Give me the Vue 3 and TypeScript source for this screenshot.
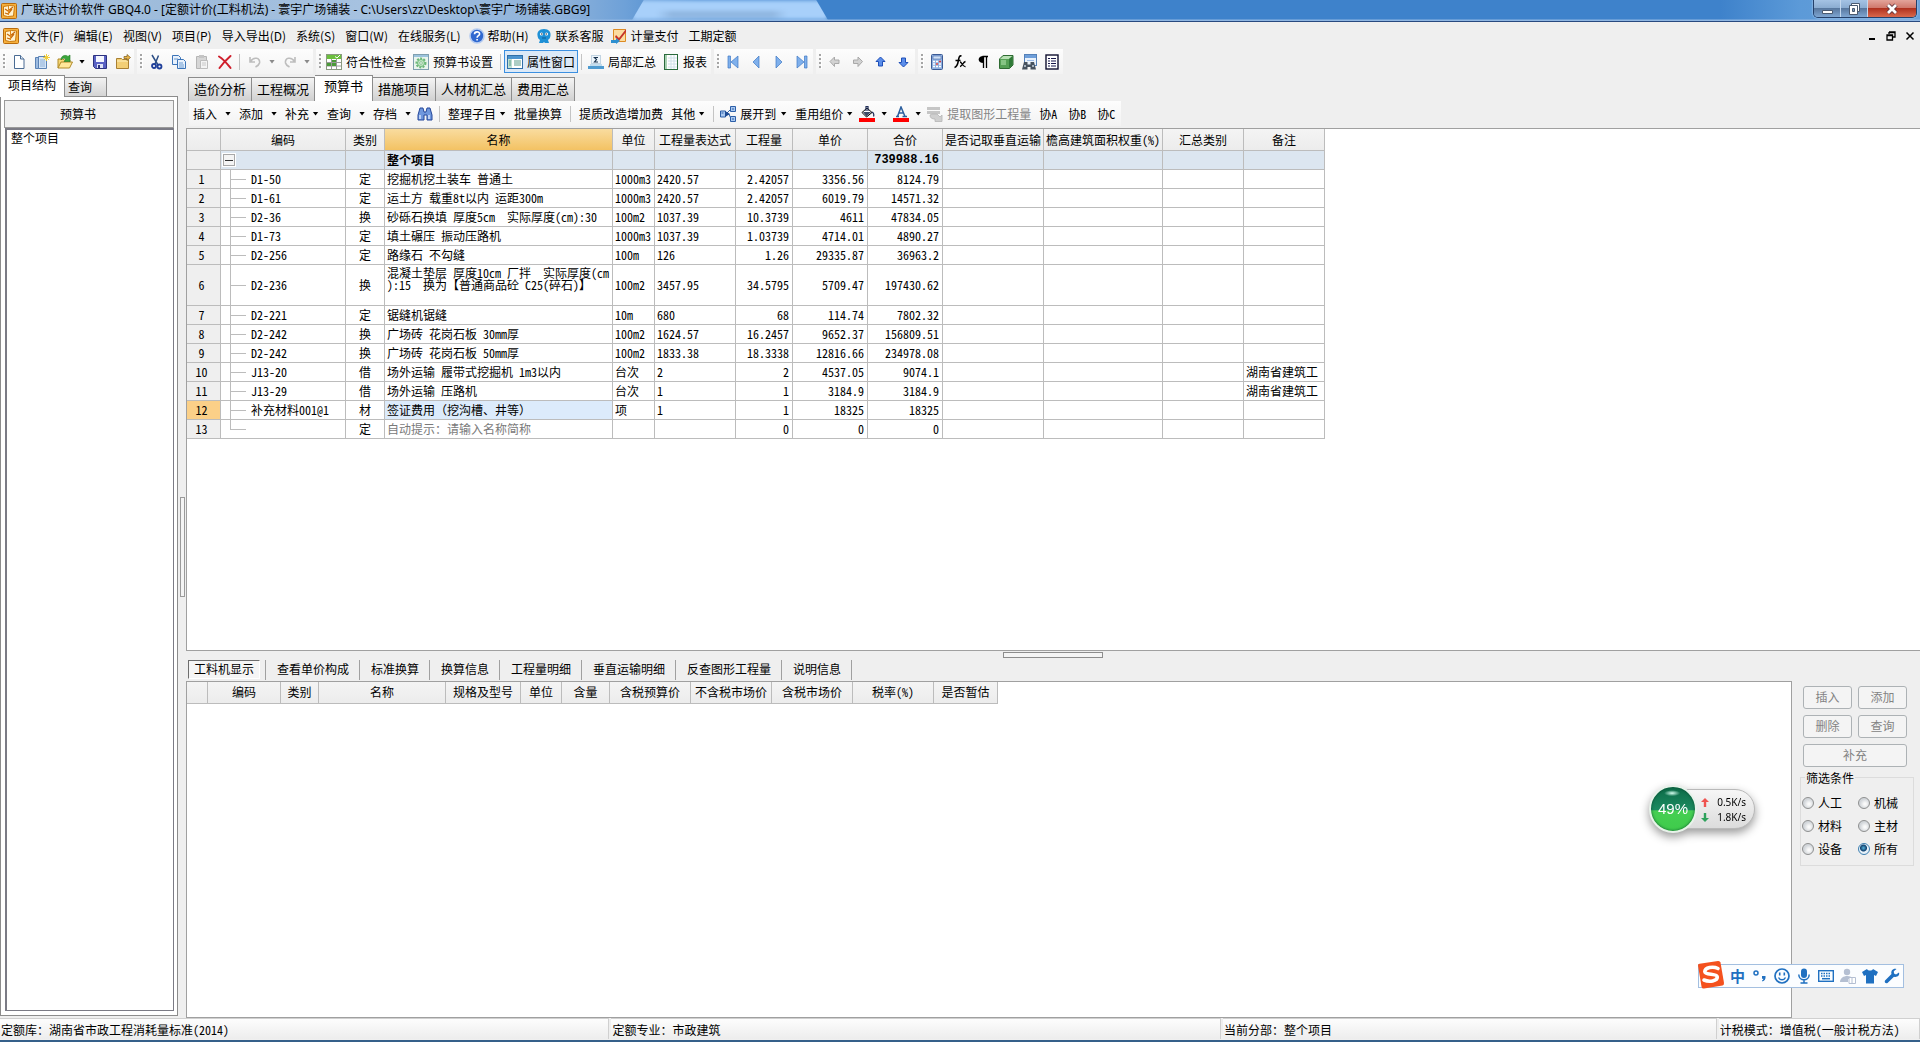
<script setup lang="ts">
import { ref } from 'vue'

interface BudgetRow {
  code: string
  kind: string
  name: string
  unit: string
  expr: string
  qty: string
  price: string
  total: string
  note?: string
}

interface Column {
  label: string
  cls: string
}

interface ToolItem {
  icon: string
  label: string
  off?: boolean
  drop?: boolean
}

const columns: Column[] = [
  { label: '', cls: 'c-num' },
  { label: '编码', cls: 'c-code' },
  { label: '类别', cls: 'c-kind' },
  { label: '名称', cls: 'c-name' },
  { label: '单位', cls: 'c-unit' },
  { label: '工程量表达式', cls: 'c-expr' },
  { label: '工程量', cls: 'c-qty' },
  { label: '单价', cls: 'c-price' },
  { label: '合价', cls: 'c-price' },
  { label: '是否记取垂直运输', cls: 'c-lift' },
  { label: '檐高建筑面积权重(%)', cls: 'c-eave' },
  { label: '汇总类别', cls: 'c-sum' },
  { label: '备注', cls: 'c-sum' },
]

const rows: BudgetRow[] = [
  { code: 'D1-50', kind: '定', name: '挖掘机挖土装车 普通土', unit: '1000m3', expr: '2420.57', qty: '2.42057', price: '3356.56', total: '8124.79' },
  { code: 'D1-61', kind: '定', name: '运土方 载重8t以内 运距300m', unit: '1000m3', expr: '2420.57', qty: '2.42057', price: '6019.79', total: '14571.32' },
  { code: 'D2-36', kind: '换', name: '砂砾石换填 厚度5cm  实际厚度(cm):30', unit: '100m2', expr: '1037.39', qty: '10.3739', price: '4611', total: '47834.05' },
  { code: 'D1-73', kind: '定', name: '填土碾压 振动压路机', unit: '1000m3', expr: '1037.39', qty: '1.03739', price: '4714.01', total: '4890.27' },
  { code: 'D2-256', kind: '定', name: '路缘石 不勾缝', unit: '100m', expr: '126', qty: '1.26', price: '29335.87', total: '36963.2' },
  { code: 'D2-236', kind: '换', name: '混凝土垫层 厚度10cm 厂拌  实际厚度(cm\n):15  换为【普通商品砼 C25(碎石)】', unit: '100m2', expr: '3457.95', qty: '34.5795', price: '5709.47', total: '197430.62' },
  { code: 'D2-221', kind: '定', name: '锯缝机锯缝', unit: '10m', expr: '680', qty: '68', price: '114.74', total: '7802.32' },
  { code: 'D2-242', kind: '换', name: '广场砖 花岗石板 30mm厚', unit: '100m2', expr: '1624.57', qty: '16.2457', price: '9652.37', total: '156809.51' },
  { code: 'D2-242', kind: '换', name: '广场砖 花岗石板 50mm厚', unit: '100m2', expr: '1833.38', qty: '18.3338', price: '12816.66', total: '234978.08' },
  { code: 'J13-20', kind: '借', name: '场外运输 履带式挖掘机 1m3以内', unit: '台次', expr: '2', qty: '2', price: '4537.05', total: '9074.1', note: '湖南省建筑工' },
  { code: 'J13-29', kind: '借', name: '场外运输 压路机', unit: '台次', expr: '1', qty: '1', price: '3184.9', total: '3184.9', note: '湖南省建筑工' },
  { code: '补充材料001@1', kind: '材', name: '签证费用（挖沟槽、井等）', unit: '项', expr: '1', qty: '1', price: '18325', total: '18325' },
  { code: '', kind: '定', name: '自动提示：请输入名称简称', unit: '', expr: '', qty: '0', price: '0', total: '0' },
]

const menus = ['文件(F)', '编辑(E)', '视图(V)', '项目(P)', '导入导出(D)', '系统(S)', '窗口(W)', '在线服务(L)']
const fileTools: ToolItem[] = [
  { icon: 'new', label: '新建' },
  { icon: 'newproj', label: '新建项目' },
  { icon: 'open', label: '打开', drop: true },
  { icon: 'save', label: '保存' },
  { icon: 'export', label: '导出' },
]
const editTools: ToolItem[] = [
  { icon: 'cut', label: '剪切' },
  { icon: 'copy', label: '复制' },
  { icon: 'paste', label: '粘贴', off: true },
  { icon: 'del', label: '删除' },
]
const undoTools: ToolItem[] = [
  { icon: 'undo', label: '撤销', off: true, drop: true },
  { icon: 'redo', label: '重做', off: true, drop: true },
]
const navTools: ToolItem[] = [
  { icon: 'first', label: '第一条' },
  { icon: 'prev', label: '上一条' },
  { icon: 'next', label: '下一条' },
  { icon: 'last', label: '最后一条' },
]
const moveTools: ToolItem[] = [
  { icon: 'left', label: '升级', off: true },
  { icon: 'right', label: '降级', off: true },
  { icon: 'up', label: '上移' },
  { icon: 'down', label: '下移' },
]
const miscTools: ToolItem[] = [
  { icon: 'calc', label: '计算器' },
  { icon: 'fx', label: '函数' },
  { icon: 'pilcrow', label: '特殊符号' },
  { icon: 'cube', label: '体积' },
  { icon: 'find', label: '查找' },
  { icon: 'list', label: '列表' },
]

const pages = ['造价分析', '工程概况', '预算书', '措施项目', '人材机汇总', '费用汇总']
const page = ref('预算书')
const details = ['工料机显示', '查看单价构成', '标准换算', '换算信息', '工程量明细', '垂直运输明细', '反查图形工程量', '说明信息']
const detail = ref('工料机显示')
const selected = ref(12)

const detailColumns: Column[] = [
  { label: '', cls: 'd-21' },
  { label: '编码', cls: 'd-73' },
  { label: '类别', cls: 'd-38' },
  { label: '名称', cls: 'd-127' },
  { label: '规格及型号', cls: 'd-75' },
  { label: '单位', cls: 'd-41' },
  { label: '含量', cls: 'd-48' },
  { label: '含税预算价', cls: 'd-81' },
  { label: '不含税市场价', cls: 'd-81' },
  { label: '含税市场价', cls: 'd-81' },
  { label: '税率(%)', cls: 'd-81' },
  { label: '是否暂估', cls: 'd-64' },
]

const filters = ['人工', '机械', '材料', '主材', '设备', '所有']
const filter = ref('所有')
</script>

<template>
  <div class="app">
    <svg class="sprite" width="0" height="0" aria-hidden="true">
      <symbol id="g-app" viewBox="0 0 16 16">
        <rect x="0.5" y="0.5" width="15" height="15" rx="1" fill="#f6b03c" stroke="#b96b0c" />
        <path d="M2.500 3.500l6-1 5 .5-1 10-6 .5-4-1z" fill="#fff3d0" stroke="#c8780f" />
        <path d="M4 6l3 2 5-4M4 10l3 1 4-5" fill="none" stroke="#c8690a" stroke-width="1.300" />
        <path d="M7.500 3v9" fill="none" stroke="#e08a1c" />
      </symbol>
      <symbol id="g-new" viewBox="0 0 16 16">
        <path d="M3.500 1.500h6l3.500 3.500v9.500h-9.500z" fill="#fff" stroke="#4a6b93" />
        <path d="M9.500 1.500v3.500h3.500" fill="#dbe7f5" stroke="#4a6b93" />
      </symbol>
      <symbol id="g-newproj" viewBox="0 0 16 16">
        <path d="M1.500 3.500h3v11h-3z" fill="#9dbbe0" stroke="#5b82b5" />
        <path d="M4.500 2.500h8v12h-8z" fill="#d5e5f7" stroke="#5b82b5" />
        <path d="M6 6h5M6 8h5M6 10h5M6 12h5" stroke="#8eb0d8" />
        <path d="M12.500 0v7M9 3.500h7M10 1l5 5M15 1l-5 5" stroke="#f3cf3a" />
      </symbol>
      <symbol id="g-open" viewBox="0 0 16 16">
        <path d="M1 14V5h5l1 1h6v3" fill="#f7d774" stroke="#b08a28" />
        <path d="M1 14l3-6h11.500l-3 6z" fill="#ffe79a" stroke="#b08a28" />
        <path d="M4 6c0-5 5-5.500 7-3.500L13 1v6.500H7L9 5C7 4 5.500 4 4 6z" fill="#3aa63a" stroke="#1f7a24" stroke-width="0.600" />
      </symbol>
      <symbol id="g-save" viewBox="0 0 16 16">
        <path d="M1.500 1.500h13v13h-11l-2-2z" fill="#5a62c4" stroke="#2c327f" />
        <path d="M4 2h8v6H4z" fill="#f4f6ff" />
        <path d="M5 10h6v4H5z" fill="#dfe3f7" />
        <path d="M6 11h2v3H6z" fill="#2c327f" />
      </symbol>
      <symbol id="g-export" viewBox="0 0 16 16">
        <path d="M1.500 4.500h5l1 1h6v9h-12z" fill="#f3cf75" stroke="#a98032" />
        <path d="M2 7h11" stroke="#fff1bf" />
        <path d="M9 4.500V2.500h3V0.500L15.500 3.500 12 6.500V4.500z" fill="#e9b54a" stroke="#7a5a1a" stroke-width="0.700" />
      </symbol>
      <symbol id="g-cut" viewBox="0 0 16 16">
        <path d="M4 1l6 10M10.500 1.500L7 10" stroke="#2d4f86" stroke-width="1.500" fill="none" />
        <circle cx="6" cy="12" r="2" fill="none" stroke="#1f3f9a" stroke-width="1.800" />
        <circle cx="11.500" cy="12.500" r="2" fill="none" stroke="#1f3f9a" stroke-width="1.800" />
      </symbol>
      <symbol id="g-copy" viewBox="0 0 16 16">
        <path d="M1.500 1.500h6l2 2v7h-8z" fill="#e8f1fc" stroke="#3c74b8" />
        <path d="M6.500 5.500h6l2 2v7h-8z" fill="#e8f1fc" stroke="#3c74b8" />
        <path d="M3 5h4M8 9h4M8 11h5M8 13h5" stroke="#6b9bd1" />
      </symbol>
      <symbol id="g-paste" viewBox="0 0 16 16">
        <path d="M2.500 2.500h10v12h-10z" fill="#d6d6d6" stroke="#b5b5b5" />
        <path d="M5 1h5v3H5z" fill="#c4c4c4" />
        <path d="M6.500 6.500h7v8h-7z" fill="#f3f3f3" stroke="#bdbdbd" />
        <path d="M8 9h4M8 11h4" stroke="#c8c8c8" />
      </symbol>
      <symbol id="g-del" viewBox="0 0 16 16">
        <path d="M2 2.500c5 3 8 7 11.500 11.500M13.500 2C9 6 6 9 2.500 14" fill="none" stroke="#cf1f2c" stroke-width="2" stroke-linecap="round" />
      </symbol>
      <symbol id="g-undo" viewBox="0 0 16 16">
        <path d="M3 3v5h5M3.500 7.500c3-5 10-4 9 1.500-.5 2-2 3-4 4" fill="none" stroke="#bdbdbd" stroke-width="1.600" />
      </symbol>
      <symbol id="g-redo" viewBox="0 0 16 16">
        <path d="M13 3v5H8M12.500 7.500c-3-5-10-4-9 1.500.5 2 2 3 4 4" fill="none" stroke="#bdbdbd" stroke-width="1.600" />
      </symbol>
      <symbol id="g-check" viewBox="0 0 16 16">
        <rect x="0.500" y="0.500" width="15" height="15" fill="#fff" stroke="#8a9a80" />
        <path d="M1 1h14v4H1z" fill="#6cbf3f" />
        <path d="M1 8.500h14M1 12h14M5.500 5v10M10.500 5v10" stroke="#9a9a9a" />
        <path d="M6 6h4v2H6zM6 9h4v3H6zM1 9h4v3H1z" fill="#4a9a38" />
        <path d="M9 2.500l2 1.500 3-3" stroke="#fff" fill="none" />
      </symbol>
      <symbol id="g-gear" viewBox="0 0 16 16">
        <rect x="0.500" y="0.500" width="15" height="15" fill="#eaf4ee" stroke="#7f9faf" />
        <path d="M1 1h14v2H1z" fill="#9cc3dd" />
        <circle cx="8" cy="9" r="4.500" fill="none" stroke="#6cb878" stroke-width="2" stroke-dasharray="2 1.300" />
        <circle cx="8" cy="9" r="3.500" fill="#c3e6c5" stroke="#6cb878" />
        <circle cx="8" cy="9" r="1.300" fill="#fff" stroke="#57a668" stroke-width="0.600" />
      </symbol>
      <symbol id="g-prop" viewBox="0 0 16 16">
        <rect x="0.500" y="1.500" width="15" height="13" fill="#fff" stroke="#2f6fa8" />
        <path d="M1 2h14v3H1z" fill="#4c94cf" />
        <path d="M1 5h4v9H1z" fill="#bfe0d3" />
        <path d="M2 7h2M2 9h2M2 11h2M7 7h7M7 9h7M7 11h7" stroke="#5a9b8a" />
      </symbol>
      <symbol id="g-sigma" viewBox="0 0 16 16">
        <rect x="3.500" y="1.500" width="9" height="8" fill="#eef6fc" stroke="#c2d4e2" />
        <path d="M10 3.500H6.500l2 2-2 2.500H10" fill="none" stroke="#1b3550" stroke-width="1.200" />
        <path d="M2 11h12" stroke="#8cc3e6" stroke-width="1" />
        <path d="M0 13.500h16" stroke="#4f9bd0" stroke-width="3" />
      </symbol>
      <symbol id="g-report" viewBox="0 0 16 16">
        <rect x="1.500" y="0.500" width="13" height="15" fill="#fff" stroke="#2b6b3c" />
        <path d="M2 1h2v14H2z" fill="#a9d0b2" />
        <path d="M5 4h9M5 7h9M5 10h9M5 13h9M8 1v14M11 1v14" stroke="#cfe0e8" />
      </symbol>
      <symbol id="g-first" viewBox="0 0 16 16">
        <path d="M3 2h2.500v12H3zM13 2v12L6 8z" fill="#7fb0ec" stroke="#3f78c4" stroke-width="0.700" />
      </symbol>
      <symbol id="g-prev" viewBox="0 0 16 16">
        <path d="M11 2v12L5 8z" fill="#7fb0ec" stroke="#3f78c4" stroke-width="0.700" />
      </symbol>
      <symbol id="g-next" viewBox="0 0 16 16">
        <path d="M5 2v12l6-6z" fill="#7fb0ec" stroke="#3f78c4" stroke-width="0.700" />
      </symbol>
      <symbol id="g-last" viewBox="0 0 16 16">
        <path d="M10.500 2H13v12h-2.500zM3 2v12l7-6z" fill="#7fb0ec" stroke="#3f78c4" stroke-width="0.700" />
      </symbol>
      <symbol id="g-left" viewBox="0 0 16 16">
        <path d="M3 7.500L7.500 3v3H12v3.500H7.500v3z" fill="#d2d2d2" stroke="#a9a9a9" />
      </symbol>
      <symbol id="g-right" viewBox="0 0 16 16">
        <path d="M12.500 7.500L8 3v3H3.500v3.500H8v3z" fill="#d2d2d2" stroke="#a9a9a9" />
      </symbol>
      <symbol id="g-up" viewBox="0 0 16 16">
        <path d="M7.500 3L12 7.500H9.500V12h-4V7.500H3z" fill="#5b8eea" stroke="#1f4fb8" />
      </symbol>
      <symbol id="g-down" viewBox="0 0 16 16">
        <path d="M7.500 13L12 8.500H9.500V4h-4v4.500H3z" fill="#5b8eea" stroke="#1f4fb8" />
      </symbol>
      <symbol id="g-calc" viewBox="0 0 16 16">
        <rect x="2.500" y="0.500" width="11" height="15" rx="1" fill="#8fb0e0" stroke="#3b5a94" />
        <path d="M4 2h8v3H4z" fill="#cfe0f6" stroke="#4a6ba8" stroke-width="0.600" />
        <path d="M4 7.500h8M4 10h8M4 12.500h8" stroke="#fff" stroke-width="1.600" stroke-dasharray="2 1" />
        <path d="M7 10h2M10 7.500h2" stroke="#d23b3b" stroke-width="1.500" />
      </symbol>
      <symbol id="g-fx" viewBox="0 0 16 16">
        <path d="M9.500 2C7.500 1.500 7 3 6.500 6S5.500 13 2.500 13.500M3.500 6.500h5" fill="none" stroke="#000" stroke-width="1.600" />
        <path d="M8 8c2 0 2.500 5 5.500 4.500M13.500 7.500C11 8 10.500 12 8 12.500" fill="none" stroke="#000" stroke-width="1.300" />
      </symbol>
      <symbol id="g-pilcrow" viewBox="0 0 16 16">
        <path d="M13 2.500H7.500M8.500 2v12M11.500 2v12" stroke="#000" stroke-width="1.300" fill="none" />
        <path d="M8.500 2C2 2 2 9 8.500 9z" fill="#000" />
      </symbol>
      <symbol id="g-cube" viewBox="0 0 16 16">
        <path d="M1.500 5L5 1.500h10V11l-3.500 3.500h-10z" fill="#55a055" stroke="#2f6b33" />
        <path d="M2 5l3.500-3h9L11 5z" fill="#b8e0b4" />
        <path d="M11 5l3.500-3v9L11 14z" fill="#2f7a38" />
        <path d="M3 6h5v5H3z" fill="#86c584" />
      </symbol>
      <symbol id="g-find" viewBox="0 0 16 16">
        <rect x="3.500" y="0.500" width="12" height="11" fill="#eaf2fb" stroke="#5581b8" />
        <path d="M4 1h11v3H4z" fill="#6f9fda" />
        <path d="M6 6.500h7" stroke="#9dbce6" />
        <path d="M3 8h3.500v2.500h3V8H13l2 7.500h-5.500V13h-3v2.500H1z" fill="#46525f" />
        <path d="M3 12h2M11 12h2" stroke="#c5d2df" stroke-width="1.500" />
      </symbol>
      <symbol id="g-list" viewBox="0 0 16 16">
        <rect x="2" y="1" width="12" height="14" fill="#fff" stroke="#101030" stroke-width="1.400" />
        <path d="M4 4.500h2M4 7h2M4 9.500h2M4 12h2M7 4.500h5M7 7h5M7 9.500h5M7 12h5" stroke="#17174a" />
      </symbol>
      <symbol id="g-help" viewBox="0 0 16 16">
        <circle cx="8" cy="8" r="7" fill="#2f68d0" stroke="#b5cbf0" stroke-width="1.600" />
        <path d="M5.500 6.300C5.500 3 10.700 3.200 10.600 6c0 1.700-2.500 1.800-2.500 3.800M8.100 11v1.600" fill="none" stroke="#fff" stroke-width="1.600" />
      </symbol>
      <symbol id="g-service" viewBox="0 0 16 16">
        <path d="M8 1c5 0 7 3 6.500 6.500C14 11 13 11 12 12l1 3H9l-1-1-1 1H3l1-3C3 11 2 11 1.500 7.500 1 4 3 1 8 1z" fill="#1e90d6" />
        <circle cx="5.500" cy="6" r="1.600" fill="#fff" /><circle cx="10.500" cy="6" r="1.600" fill="#fff" />
        <circle cx="5.800" cy="6" r="0.700" fill="#123" /><circle cx="10.200" cy="6" r="0.700" fill="#123" />
        <path d="M6 10h4" stroke="#0b5c94" />
      </symbol>
      <symbol id="g-pay" viewBox="0 0 16 16">
        <path d="M2.500 1.500h12v12h-12z" fill="#fbdca0" stroke="#dd8a22" />
        <path d="M15 1L8 10l-3-3-1 2 4 4 7-9z" fill="#c5342a" />
        <path d="M0 12h5v-2l4 3-4 3v-1H0z" fill="#2d8fd0" />
      </symbol>
      <symbol id="g-bino" viewBox="0 0 16 16">
        <path d="M3 2h3l1 4h2l1-4h3l2 7v5h-5V9H7v5H1V9z" fill="#6f97dd" stroke="#24479a" />
        <path d="M3 9v4M12 9v4" stroke="#dce8ff" stroke-width="1.400" />
      </symbol>
      <symbol id="g-expand" viewBox="0 0 16 16">
        <path d="M6 8l5-5M6 8h3l2 5" stroke="#2c5fa8" fill="none" />
        <path d="M0.500 5h5v6h-5zM10.500 0.500h5v5h-5zM10.500 10.500h5v5h-5z" fill="#a9c8f0" stroke="#2c5fa8" />
        <path d="M5 5l5 3-5 3z" fill="#1f4c94" />
        <path d="M12 3h2M12 13h2M1.500 7h2" stroke="#2c5fa8" />
      </symbol>
      <symbol id="g-bucket" viewBox="0 0 16 16">
        <path d="M3 6.500L8 2l5 4.500L7.500 11z" fill="#fff" stroke="#000" />
        <path d="M4 6h8l-4.500 4.500z" fill="#3c4a66" />
        <path d="M7 5V0.500h2V5M13 6c2 1 2 3 1.500 4.500" fill="none" stroke="#1d2b56" stroke-width="1.200" />
        <path d="M0 12h16v4H0z" fill="#f00" />
      </symbol>
      <symbol id="g-fontcolor" viewBox="0 0 16 16">
        <path d="M3 10.500h3M9.500 10.500H14M4.500 10.500L8 1l4 9.500M6 7h5" fill="none" stroke="#2c5f9e" stroke-width="1.500" />
        <path d="M0 12h16v4H0z" fill="#f00" />
      </symbol>
      <symbol id="g-extract" viewBox="0 0 16 16">
        <path d="M0 1h13v3H0zM0 5h13v3H0z" fill="#c6c6c6" />
        <path d="M3 9c0 3 2 4 5 4v2.500l7-0V9l-2 2-3-3H5z" fill="#cfcfcf" stroke="#b5b5b5" stroke-width="0.800" />
      </symbol>
    </svg>

    <header class="titlebar">
      <div class="ghost-tab"></div>
      <svg class="ic"><use href="#g-app" /></svg>
      <h1>广联达计价软件 GBQ4.0 - [定额计价(工料机法) - 寰宇广场铺装 - C:\Users\zz\Desktop\寰宇广场铺装.GBG9]</h1>
      <div class="winbtns">
        <button class="wb" aria-label="最小化"><svg width="13" height="14" viewBox="0 0 13 14"><path d="M1.500 8.500h10v3h-10z" fill="#fff" stroke="#4a5a70" /></svg></button>
        <button class="wb" aria-label="还原"><svg width="13" height="14" viewBox="0 0 13 14"><path d="M3.500 1.500h8v8h-8z" fill="#fff" stroke="#4a5a70" /><path d="M1.500 3.500h8v9h-8z" fill="#fff" stroke="#4a5a70" /><path d="M4.500 6.500h2v3h-2z" fill="#7d9dbd" stroke="#4a5a70" /></svg></button>
        <button class="wb close" aria-label="关闭"><svg width="14" height="14" viewBox="0 0 14 14"><path d="M3 3l8 8M11 3l-8 8" stroke="#5b3038" stroke-width="4.500" /><path d="M3 3l8 8M11 3l-8 8" stroke="#fff" stroke-width="2.800" /></svg></button>
      </div>
    </header>

    <nav class="menubar">
      <svg class="ic"><use href="#g-app" /></svg>
      <button v-for="m in menus" :key="m" class="menu">{{ m }}</button>
      <button class="menu"><svg class="ic"><use href="#g-help" /></svg>帮助(H)</button>
      <button class="menu"><svg class="ic"><use href="#g-service" /></svg>联系客服</button>
      <button class="menu"><svg class="ic"><use href="#g-pay" /></svg>计量支付</button>
      <button class="menu">工期定额</button>
      <div class="mdi">
        <button aria-label="最小化子窗口"><svg width="10" height="10" viewBox="0 0 10 10"><path d="M2 8h6" stroke="#000" stroke-width="2" /></svg></button>
        <button aria-label="还原子窗口"><svg width="10" height="10" viewBox="0 0 10 10"><path d="M3 1h6v5H7M3 1v2M3 1.500h6M1 4h5.500v5H1zM1 4.500h5" fill="none" stroke="#000" stroke-width="1.300" /></svg></button>
        <button aria-label="关闭子窗口"><svg width="10" height="10" viewBox="0 0 10 10"><path d="M1.500 1.500l7 7M8.500 1.500l-7 7" stroke="#000" stroke-width="1.500" /></svg></button>
      </div>
    </nav>

    <div class="toolbar">
      <div class="group">
        <i class="grip"></i>
        <template v-for="t in fileTools" :key="t.icon">
          <button class="tb" :aria-label="t.label"><svg class="ic"><use :href="'#g-' + t.icon" /></svg></button>
          <button v-if="t.drop" class="drop" :aria-label="t.label + '选项'"><i class="caret"></i></button>
        </template>
      </div>
      <div class="group">
        <i class="grip"></i>
        <button v-for="t in editTools" :key="t.icon" class="tb" :aria-label="t.label" :disabled="t.off"><svg class="ic"><use :href="'#g-' + t.icon" /></svg></button>
        <i class="sep slim"></i>
        <template v-for="t in undoTools" :key="t.icon">
          <button class="tb" :aria-label="t.label" disabled><svg class="ic"><use :href="'#g-' + t.icon" /></svg></button>
          <button class="drop" :aria-label="t.label + '选项'" disabled><i class="caret grey"></i></button>
        </template>
      </div>
      <div class="group">
        <i class="grip"></i>
        <button class="tx"><svg class="ic"><use href="#g-check" /></svg>符合性检查</button>
        <button class="tx"><svg class="ic"><use href="#g-gear" /></svg>预算书设置</button>
        <i class="sep slim"></i>
        <button class="tx pressed"><svg class="ic"><use href="#g-prop" /></svg>属性窗口</button>
        <i class="sep slim"></i>
        <button class="tx"><svg class="ic"><use href="#g-sigma" /></svg>局部汇总</button>
        <button class="tx"><svg class="ic"><use href="#g-report" /></svg>报表</button>
      </div>
      <div v-for="(set, i) in [navTools, moveTools, miscTools]" :key="i" class="group">
        <i class="grip"></i>
        <button v-for="t in set" :key="t.icon" class="tb" :aria-label="t.label" :disabled="t.off"><svg class="ic"><use :href="'#g-' + t.icon" /></svg></button>
      </div>
    </div>

    <div class="body">
      <aside class="side">
        <div class="sidetabs">
          <button class="sidetab on">项目结构</button>
          <button class="sidetab">查询</button>
        </div>
        <div class="sidepanel">
          <div class="sidehead">预算书</div>
          <ul class="tree"><li><a href="#">整个项目</a></li></ul>
        </div>
      </aside>
      <div class="vsplit"><i class="vhandle"></i></div>

      <main class="main">
        <div class="pages">
          <button v-for="p in pages" :key="p" class="page" :class="{ on: p === page }" @click="page = p">{{ p }}</button>
        </div>
        <div class="toolbar second">
          <div class="group">
            <button class="m">插入</button><button class="drop wide" aria-label="插入选项"><i class="caret"></i></button>
            <button class="m">添加</button><button class="drop wide" aria-label="添加选项"><i class="caret"></i></button>
            <button class="m">补充<i class="caret"></i></button>
            <button class="m">查询</button><button class="drop wide" aria-label="查询选项"><i class="caret"></i></button>
            <button class="m">存档</button><button class="drop wide" aria-label="存档选项"><i class="caret"></i></button>
            <button class="im" aria-label="查找"><svg class="ic"><use href="#g-bino" /></svg></button>
            <i class="sep"></i>
            <button class="m">整理子目<i class="caret"></i></button>
            <button class="m">批量换算</button>
            <i class="sep"></i>
            <button class="m">提质改造增加费</button>
            <button class="m">其他<i class="caret"></i></button>
            <i class="sep"></i>
            <button class="im"><svg class="ic"><use href="#g-expand" /></svg>展开到<i class="caret"></i></button>
            <button class="m">重用组价<i class="caret"></i></button>
            <button class="im" aria-label="背景色"><svg class="ic"><use href="#g-bucket" /></svg></button><button class="drop wide" aria-label="背景色选项"><i class="caret"></i></button>
            <button class="im" aria-label="字体颜色"><svg class="ic"><use href="#g-fontcolor" /></svg></button><button class="drop wide" aria-label="字体颜色选项"><i class="caret"></i></button>
            <button class="im" disabled><svg class="ic"><use href="#g-extract" /></svg>提取图形工程量</button>
            <button class="m xie">协A</button>
            <button class="m xie">协B</button>
            <button class="m xie">协C</button>
          </div>
        </div>

        <section class="gridbox">
          <table class="grid">
            <colgroup><col v-for="(c, i) in columns" :key="i" :class="c.cls" /></colgroup>
            <thead>
              <tr><th v-for="(c, i) in columns" :key="i" :class="{ hot: c.label === '名称' }">{{ c.label }}</th></tr>
            </thead>
            <tbody>
              <tr class="root">
                <td class="num"></td>
                <td class="toggle"><button class="minus" aria-label="折叠"></button></td>
                <td></td>
                <td>整个项目</td>
                <td></td><td></td><td></td><td></td>
                <td class="r">739988.16</td>
                <td></td><td></td><td></td><td></td>
              </tr>
              <tr v-for="(r, i) in rows" :key="i" :class="{ tall: r.name.includes('\n'), sel: selected === i + 1, tail: !r.code }" @click="selected = i + 1">
                <td class="num">{{ i + 1 }}</td>
                <td class="code">{{ r.code }}</td>
                <td class="c">{{ r.kind }}</td>
                <td class="name">{{ r.name }}</td>
                <td>{{ r.unit }}</td>
                <td>{{ r.expr }}</td>
                <td class="r">{{ r.qty }}</td>
                <td class="r">{{ r.price }}</td>
                <td class="r">{{ r.total }}</td>
                <td></td><td></td><td></td>
                <td>{{ r.note }}</td>
              </tr>
            </tbody>
          </table>
        </section>

        <div class="hsplit"><i class="hhandle"></i></div>
        <div class="details">
          <button v-for="d in details" :key="d" class="detail" :class="{ on: d === detail }" @click="detail = d"><span>{{ d }}</span></button>
        </div>

        <div class="lower">
          <section class="lowgrid">
            <table class="grid">
              <colgroup><col v-for="(c, i) in detailColumns" :key="i" :class="c.cls" /></colgroup>
              <thead><tr><th v-for="(c, i) in detailColumns" :key="i">{{ c.label }}</th></tr></thead>
            </table>
          </section>
          <aside class="ops">
            <div class="opbtns">
              <button disabled>插入</button>
              <button disabled>添加</button>
              <button disabled>删除</button>
              <button disabled>查询</button>
              <button class="full" disabled>补充</button>
            </div>
            <fieldset>
              <legend>筛选条件</legend>
              <label v-for="f in filters" :key="f"><input v-model="filter" type="radio" name="filter" :value="f" />{{ f }}</label>
            </fieldset>
          </aside>
        </div>
      </main>
    </div>

    <footer class="status">
      <span class="s1">定额库：湖南省市政工程消耗量标准(2014)</span>
      <span class="s1">定额专业：市政建筑</span>
      <span class="s2">当前分部：整个项目</span>
      <span class="s3">计税模式：增值税(一般计税方法)</span>
    </footer>

    <div class="monitor">
      <div class="ball">49%</div>
      <div class="rates">
        <div><svg width="8" height="9" viewBox="0 0 8 9"><path d="M4 0l4 4H5.200v5H2.800V4H0z" fill="#ef5350" /></svg>0.5K/s</div>
        <div><svg width="8" height="9" viewBox="0 0 8 9"><path d="M4 9l4-4H5.200V0H2.800v5H0z" fill="#2fa25c" /></svg>1.8K/s</div>
      </div>
    </div>

    <div class="ime">
      <svg class="sogou" width="30" height="30" viewBox="0 0 30 30">
        <path d="M2 5.500Q2 4 3.500 3.700L22 1q2-.2 2.500 1.500L28 23q.2 2-1.500 2.500L8 28.500q-2 .3-2.400-1.500z" fill="#f4511e" />
        <path d="M22 8.500C17 6 9 7.500 8.800 11.500c0 4 12.500 1.500 12.500 5.500 0 4-8 5.500-13.300 3" fill="none" stroke="#fff" stroke-width="3.600" stroke-linecap="round" />
      </svg>
      <b>中</b>
      <svg width="16" height="16" viewBox="0 0 16 16"><circle cx="4" cy="5" r="2" fill="none" stroke="#1f70c1" stroke-width="1.500" /><path d="M10 8h3.500c.5 3-1 5-3 5.500l-.5-1c1-.5 1.300-1 1.300-1.700H10z" fill="#1f70c1" /></svg>
      <svg width="16" height="16" viewBox="0 0 16 16"><circle cx="8" cy="8" r="7" fill="none" stroke="#1f70c1" stroke-width="1.700" /><path d="M5.700 4.500v3M10.300 4.500v3" stroke="#1f70c1" stroke-width="1.600" /><path d="M4.500 9.500c1.500 3 5.500 3 7 0" fill="none" stroke="#1f70c1" stroke-width="1.500" /></svg>
      <svg width="16" height="16" viewBox="0 0 16 16"><rect x="5" y="0.500" width="6" height="9.500" rx="3" fill="#1f70c1" /><path d="M2.800 6.500c0 7 10.400 7 10.400 0M8 12v3M4.500 15h7" fill="none" stroke="#1f70c1" stroke-width="1.500" /></svg>
      <svg width="16" height="16" viewBox="0 0 16 16"><rect x="0.700" y="2.700" width="14.600" height="10.600" fill="none" stroke="#1f70c1" stroke-width="1.400" /><path d="M3 5.500h10M3 8h10" stroke="#1f70c1" stroke-width="1.500" stroke-dasharray="1.500 1" /><path d="M4 10.700h8" stroke="#1f70c1" stroke-width="1.500" /></svg>
      <svg width="16" height="16" viewBox="0 0 16 16"><circle cx="7" cy="4" r="3.200" fill="#b4bfd2" /><path d="M0 14c0-7 11-8 13-3H8v3z" fill="#b4bfd2" /><path d="M9 9.500h6.500v6H9zM12 9.500v6" fill="#fff" stroke="#b4bfd2" /></svg>
      <svg width="16" height="16" viewBox="0 0 16 16"><path d="M5 1c1 2 5 2 6 0l5 3-2 4-2-1v8.500H4V7L2 8 0 4z" fill="#1f70c1" /></svg>
      <svg width="16" height="16" viewBox="0 0 16 16"><path d="M15 4.500l-3 2-2-1-.2-2.300L12.500 1C9 0 6.500 3 7.500 6L1 12.500c-1 2 1 3.500 2.500 2.500L10 8.700c3 .8 6-1.200 5-4.200z" fill="#1f70c1" /></svg>
    </div>
  </div>
</template>

<style>
body {
  margin: 0;
  background: #efefef;
}
</style>

<style scoped>
.app {
  --song: "Noto Sans Mono CJK SC", "Noto Sans CJK SC", sans-serif;
  --hei: "Noto Sans CJK SC", "Noto Sans", sans-serif;
  display: flex;
  flex-direction: column;
  min-height: 100vh;
  background: #efefef;
  color: #000;
  font: 12px/16px var(--hei);
  overflow: hidden;
}

.app * {
  box-sizing: border-box;
}

button {
  margin: 0;
  padding: 0;
  border: 0;
  background: none;
  color: inherit;
  font: inherit;
  white-space: nowrap;
}

.sprite {
  position: absolute;
}

.ic {
  flex: none;
  width: 16px;
  height: 16px;
}

.titlebar {
  position: relative;
  display: flex;
  align-items: center;
  height: 22px;
  padding-left: 1px;
  border-bottom: 1px solid #284a80;
  background:
    linear-gradient(transparent 19px, #8fb6e2 20px),
    linear-gradient(90deg, #a9c3de 0, #9dbbdb 180px, #a6c2e0 360px, #8eb2da 560px, #6ea1d8 625px, #3e82cb 700px, #3e82cb 1720px, #5c9ad8 1800px, #6aa2da 100%);
}

.ghost-tab {
  position: absolute;
  left: 632px;
  top: 0;
  width: 196px;
  height: 20px;
  background: linear-gradient(90deg, transparent 24px, #8fb5df 40px, #8fb5df 140px, transparent 156px) 0 11px / 100% 7px no-repeat, #a8d0fa;
  clip-path: polygon(6% 0, 94% 0, 100% 100%, 0 100%);
  filter: blur(2px);
}

.titlebar h1 {
  margin: 0 0 3px 4px;
  font: 12px/17px "Noto Sans", "Noto Sans CJK SC", sans-serif;
  white-space: nowrap;
}

.winbtns {
  display: flex;
  align-self: flex-start;
  height: 18px;
  margin: 0 3px 0 auto;
  border: 1px solid #24406a;
  border-top: 0;
  border-radius: 0 0 5px 5px;
  overflow: hidden;
  box-shadow: 0 0 2px #d8e8fa;
}

.wb {
  display: flex;
  align-items: center;
  justify-content: center;
  width: 27px;
  border-right: 1px solid #c4d8ee;
  background: linear-gradient(#a5c3e4 0, #8cadd2 45%, #58789f 50%, #7fa6d2 100%);
}

.wb.close {
  width: 48px;
  border: 0;
  background: linear-gradient(#e3a49a 0, #d0796c 45%, #b0321f 50%, #d9694c 100%);
}

.menubar {
  display: flex;
  align-items: center;
  gap: 10px;
  height: 27px;
  padding: 0 5px 0 3px;
}

.menubar > .ic {
  margin-right: -4px;
}

.menu {
  display: flex;
  align-items: center;
  gap: 3px;
}

.menu .ic {
  margin-left: -2px;
}

.mdi {
  display: flex;
  gap: 9px;
  margin-left: auto;
}

.mdi svg {
  display: block;
}

.toolbar {
  display: flex;
  gap: 3px;
  height: 25px;
}

.group {
  display: flex;
  align-items: center;
  height: 25px;
  background: linear-gradient(#fdfdfd, #f3f3f3);
}

.grip {
  width: 3px;
  height: 15px;
  margin: 0 1px 0 3px;
  background: repeating-linear-gradient(#a5a5a5 0 2px, transparent 2px 4px);
  background-clip: content-box;
  border-right: 1px solid #fff;
}

.tb {
  display: flex;
  justify-content: center;
  width: 23px;
}

.drop {
  display: flex;
  justify-content: center;
  width: 12px;
}

.drop.wide {
  width: 14px;
}

.caret {
  flex: none;
  width: 7px;
  height: 4px;
  background: #000;
  clip-path: polygon(7% 0, 93% 0, 50% 100%);
}

.caret.grey {
  background: #8a8a8a;
}

.sep {
  width: 1px;
  height: 16px;
  margin: 0 4px;
  background: #c4c4c4;
}

.sep.slim {
  margin: 0 3px;
}

.tx {
  display: flex;
  align-items: center;
  gap: 4px;
  height: 23px;
  padding: 0 3px;
  margin-right: 1px;
}

.tx.pressed {
  margin-right: 0;
  border: 1px solid #3b8fe0;
  background: #dce9f7;
  padding: 0 2px;
}

.second {
  height: 27px;
  padding-left: 3px;
}

.m {
  display: flex;
  align-items: center;
  gap: 3px;
  padding: 0 4px;
}

.im {
  display: flex;
  align-items: center;
  gap: 4px;
  padding: 0 2px;
}

.im .caret {
  margin-right: 2px;
}

.im:disabled {
  color: #858585;
  padding-right: 4px;
}

.xie {
  margin-right: 3px;
}

.xie:last-child {
  margin-right: 2px;
}

.body {
  flex: 1;
  display: flex;
  min-height: 0;
  padding-top: 1px;
  font-family: var(--song);
}

.side {
  display: flex;
  flex-direction: column;
  width: 178px;
}

.sidetabs {
  display: flex;
  align-items: flex-end;
  height: 21px;
}

.sidetab {
  height: 19px;
  padding: 0 14px 1px 3px;
  border: 1px solid #8c8c8c;
  border-left: 0;
  border-bottom: 0;
  background: linear-gradient(#f2f2f2, #d4d4d4);
}

.sidetab.on {
  height: 22px;
  margin-bottom: -1px;
  padding: 0 8px 3px;
  background: #fff;
  z-index: 1;
}

.sidepanel {
  flex: 1;
  display: flex;
  flex-direction: column;
  margin-bottom: 2px;
  padding: 3px;
  border: 1px solid #8c8c8c;
  background: #fff;
}

.sidehead {
  height: 28px;
  padding-right: 22px;
  border: 1px solid #9a9a9a;
  background: #f0f0f0;
  line-height: 26px;
  text-align: center;
}

.tree {
  flex: 1;
  margin: 0 0 1px 1px;
  padding: 0 4px;
  border: 1px solid #7b7b85;
  border-top-width: 2px;
  border-left-width: 2px;
  list-style: none;
}

.tree a {
  color: #000;
  text-decoration: none;
}

.vsplit {
  display: flex;
  align-items: center;
  justify-content: center;
  width: 8px;
}

.vhandle {
  width: 5px;
  height: 100px;
  border: 1px solid #9a9a9a;
  background: #f4f4f4;
}

.main {
  flex: 1;
  display: flex;
  flex-direction: column;
  min-width: 0;
}

.pages {
  display: flex;
  align-items: flex-end;
  height: 26px;
  padding-left: 2px;
}

.page {
  height: 24px;
  padding: 0 5px 1px;
  border: solid #8c8c8c;
  border-width: 1px 1px 0 0;
  background: linear-gradient(#f4f4f4, #d0d0d0);
  font-size: 13px;
}

.page:first-child {
  border-left-width: 1px;
}

.page.on {
  height: 26px;
  padding: 0 9px 5px;
  background: #fff;
}

.gridbox {
  flex: 522 1 0;
  border: solid #a0a0a0;
  border-width: 1px 0 1px 1px;
  background: #fff;
}

.grid {
  width: 0;
  border-collapse: separate;
  border-spacing: 0;
  table-layout: fixed;
}

.grid th,
.grid td {
  height: 19px;
  padding: 0 2px;
  border: solid #bcbcbc;
  border-width: 0 1px 1px 0;
  line-height: 16px;
  font-weight: normal;
  text-align: left;
  white-space: pre;
  overflow: hidden;
}

.grid th {
  height: 22px;
  padding: 0;
  background: linear-gradient(#f4f4f4, #ececec);
  text-align: center;
}

.grid th.hot {
  background: linear-gradient(#f9dc9f, #f3c263);
}

.grid td.r {
  padding-right: 3px;
  text-align: right;
}

.grid td.c {
  text-align: center;
}

.grid td.num {
  background: #efefef;
  text-align: center;
  padding-right: 6px;
}

.grid .root td {
  background: #dce6f0;
  font-weight: bold;
}

.grid .root td.r {
  font-family: "Liberation Mono", monospace;
}

.grid .root td.num {
  background: #efefef;
}

.toggle {
  line-height: 0;
}

.minus {
  display: block;
  width: 12px;
  height: 12px;
  border: 1px solid #a8a8a8;
  outline: 1px solid #fff;
  background: linear-gradient(#333, #333) center / 8px 1px no-repeat, #f4f4f4;
}

.grid td.code {
  padding-left: 30px;
  background:
    linear-gradient(#bcbcbc, #bcbcbc) 9px 0 / 1px 100% no-repeat,
    linear-gradient(#bcbcbc, #bcbcbc) 9px 50% / 16px 1px no-repeat;
}

.grid .tail td.code {
  background-size: 1px 50%, 16px 1px;
}

.tail .name {
  color: #7a7a7a;
}

.grid .tall td {
  height: 41px;
}

.grid .tall td.name {
  padding-top: 2px;
  line-height: 12px;
  vertical-align: top;
}

.grid .sel td.num {
  background: #fbd088;
}

.grid .sel td.name {
  background: #dcebfb;
}

.c-num { width: 34px; }
.c-code { width: 125px; }
.c-kind { width: 39px; }
.c-name { width: 228px; }
.c-unit { width: 42px; }
.c-expr { width: 81px; }
.c-qty { width: 57px; }
.c-price { width: 75px; }
.c-lift { width: 101px; }
.c-eave { width: 119px; }
.c-sum { width: 81px; }
.d-21 { width: 21px; }
.d-38 { width: 38px; }
.d-41 { width: 41px; }
.d-48 { width: 48px; }
.d-64 { width: 64px; }
.d-73 { width: 73px; }
.d-75 { width: 75px; }
.d-81 { width: 81px; }
.d-127 { width: 127px; }

.hsplit {
  display: flex;
  justify-content: center;
  height: 8px;
  padding-top: 1px;
}

.hhandle {
  width: 100px;
  height: 6px;
  border: 1px solid #8c8c8c;
  background: #f4f4f4;
}

.details {
  display: flex;
  align-items: center;
  height: 22px;
  padding-left: 2px;
}

.detail {
  height: 20px;
  padding: 0 10px 2px 11px;
  border-right: 1px solid #a0a0a0;
}

.detail.on {
  padding: 0 5px 0 0;
}

.detail.on span {
  display: block;
  height: 19px;
  padding: 0 5px;
  border: 1px solid #fff;
  border-top-color: #6e6e6e;
  border-left-color: #6e6e6e;
  background: #f5f5f5;
}

.lower {
  flex: 338 1 0;
  display: flex;
}

.lowgrid {
  flex: 1;
  border: 1px solid #a0a0a0;
  background: #fff;
}

.ops {
  width: 128px;
  padding: 5px 6px 0 8px;
}

.opbtns {
  display: grid;
  grid-template-columns: 1fr 1fr;
  gap: 6px;
  padding: 0 7px 0 3px;
}

.opbtns button {
  height: 23px;
  border: 1px solid #adb2b5;
  border-radius: 3px;
  background: #f4f4f4;
  color: #838383;
}

.opbtns .full {
  grid-column: span 2;
}

fieldset {
  display: grid;
  grid-template-columns: 56px 56px;
  grid-auto-rows: 23px;
  margin: 3px 0 0;
  padding: 6px 0 4px;
  border: 1px solid #dcdcdc;
}

legend {
  padding: 0 1px;
  margin-left: 4px;
}

label {
  display: flex;
  align-items: center;
  gap: 4px;
}

input[type='radio'] {
  appearance: none;
  width: 12px;
  height: 12px;
  margin: 0 0 0 1px;
  border: 1px solid #8e8f8f;
  border-radius: 50%;
  background: radial-gradient(circle at 60% 60%, #fafafa 1px, #d2d6da 5px);
}

input[type='radio']:checked {
  border-color: #3c7fb1;
  background: radial-gradient(circle at 45% 40%, #57b4dc 0, #10406e 3px, #e6f0f8 4px);
}

.status {
  display: flex;
  gap: 2px;
  height: 24px;
  padding-bottom: 1px;
  border-bottom: 2px solid #35608a;
  font-family: var(--song);
}

.status span {
  flex: 610 1 0;
  height: 21px;
  padding-left: 1px;
  border: solid #d0d0d0;
  border-width: 1px 1px 0 0;
  background: linear-gradient(#fdfdfd, #ededed);
  line-height: 22px;
  white-space: nowrap;
}

.status .s2 {
  flex-grow: 494;
}

.status .s3 {
  flex-grow: 200;
}

.monitor {
  position: fixed;
  right: 165px;
  top: 785px;
  display: flex;
  align-items: center;
  filter: drop-shadow(0 4px 5px #0006);
  font-family: "Noto Sans", sans-serif;
}

.ball {
  z-index: 1;
  width: 48px;
  height: 48px;
  border: 2px solid #e8f2ea;
  border-radius: 50%;
  background:
    radial-gradient(ellipse 8px 3px at 48% 14%, #d6fff0, transparent),
    linear-gradient(#0c6b48 0, #1c8a60 52%, #45cf52 54%, #3fcb4b 100%);
  box-shadow: inset 0 0 3px #084a2e;
  color: #fff;
  font: 15px/44px "Liberation Sans", sans-serif;
  text-align: center;
}

.rates {
  width: 70px;
  height: 40px;
  margin-left: -12px;
  padding: 5px 8px 0 15px;
  border: 1px solid #b9b9b9;
  border-radius: 0 20px 20px 0;
  background: linear-gradient(#f6f6f6, #dcdcdc);
  font-size: 10px;
  line-height: 15px;
}

.rates div {
  display: flex;
  align-items: center;
  justify-content: space-between;
}

.ime {
  position: fixed;
  right: 16px;
  top: 964px;
  display: flex;
  align-items: center;
  gap: 6px;
  height: 24px;
  padding: 0 3px 0 31px;
  border: 1px solid #a3bfe0;
  background: #fbfdff;
}

.ime .sogou {
  position: absolute;
  left: -3px;
  top: -5px;
}

.ime b {
  width: 16px;
  color: #1f70c1;
  font-size: 15px;
}
</style>
